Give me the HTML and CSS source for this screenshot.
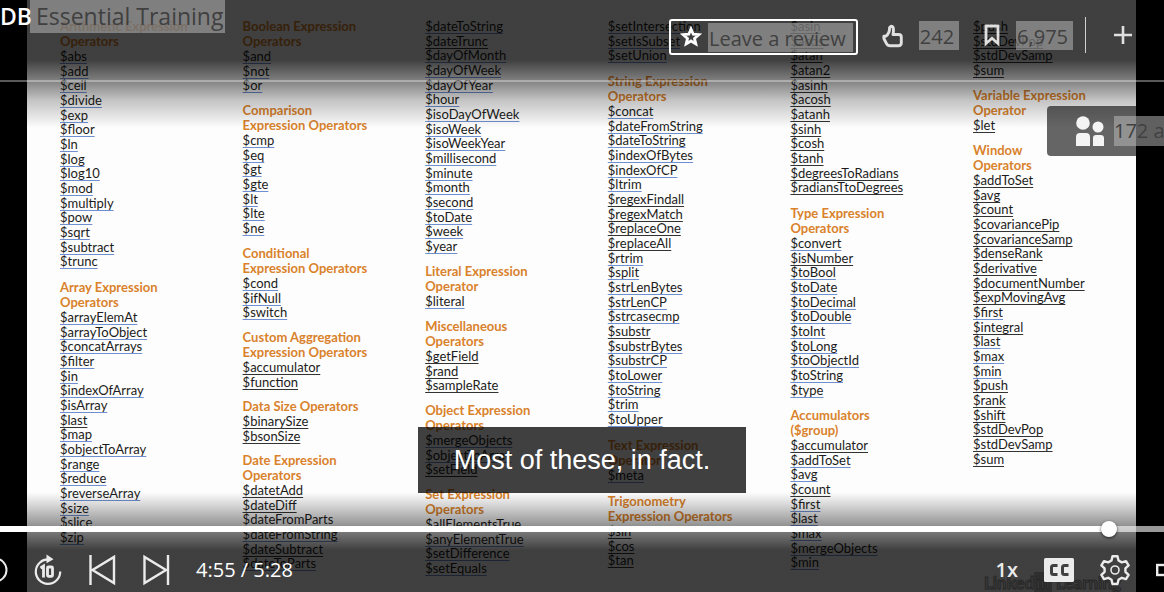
FILE: index.html
```html
<!DOCTYPE html>
<html lang="en">
<head>
<meta charset="utf-8">
<title>MongoDB Essential Training</title>
<link rel="stylesheet" href="styles.css">
</head>
<body>
<main class="player">
  <section class="slide">
    <div class="column roomy">
      <section><h3>Arithmetic Expression Operators</h3>
        <ul><li><a href="#">$abs</a></li><li><a href="#">$add</a></li><li><a href="#">$ceil</a></li><li><a href="#">$divide</a></li><li><a href="#">$exp</a></li><li><a href="#">$floor</a></li><li><a href="#">$ln</a></li><li><a href="#">$log</a></li><li><a href="#">$log10</a></li><li><a href="#">$mod</a></li><li><a href="#">$multiply</a></li><li><a href="#">$pow</a></li><li><a href="#">$sqrt</a></li><li><a href="#">$subtract</a></li><li><a href="#">$trunc</a></li></ul></section>
      <section><h3>Array Expression Operators</h3>
        <ul><li><a href="#">$arrayElemAt</a></li><li><a href="#">$arrayToObject</a></li><li><a href="#">$concatArrays</a></li><li><a href="#">$filter</a></li><li><a href="#">$in</a></li><li><a href="#">$indexOfArray</a></li><li><a href="#">$isArray</a></li><li><a href="#" class="fresh">$last</a></li><li><a href="#">$map</a></li><li><a href="#">$objectToArray</a></li><li><a href="#">$range</a></li><li><a href="#">$reduce</a></li><li><a href="#">$reverseArray</a></li><li><a href="#">$size</a></li><li><a href="#">$slice</a></li><li><a href="#">$zip</a></li></ul></section>
    </div>
    <div class="column">
      <section><h3>Boolean Expression Operators</h3>
        <ul><li><a href="#">$and</a></li><li><a href="#">$not</a></li><li><a href="#">$or</a></li></ul></section>
      <section><h3>Comparison<br>Expression Operators</h3>
        <ul><li><a href="#">$cmp</a></li><li><a href="#">$eq</a></li><li><a href="#">$gt</a></li><li><a href="#">$gte</a></li><li><a href="#">$lt</a></li><li><a href="#">$lte</a></li><li><a href="#">$ne</a></li></ul></section>
      <section><h3>Conditional<br>Expression Operators</h3>
        <ul><li><a href="#">$cond</a></li><li><a href="#">$ifNull</a></li><li><a href="#">$switch</a></li></ul></section>
      <section><h3>Custom Aggregation Expression Operators</h3>
        <ul><li><a href="#" class="fresh">$accumulator</a></li><li><a href="#" class="fresh">$function</a></li></ul></section>
      <section><h3>Data Size Operators</h3>
        <ul><li><a href="#" class="fresh">$binarySize</a></li><li><a href="#" class="fresh">$bsonSize</a></li></ul></section>
      <section><h3>Date Expression Operators</h3>
        <ul><li><a href="#" class="fresh">$datetAdd</a></li><li><a href="#" class="fresh">$dateDiff</a></li><li><a href="#">$dateFromParts</a></li><li><a href="#">$dateFromString</a></li><li><a href="#" class="fresh">$dateSubtract</a></li><li><a href="#">$dateToParts</a></li></ul></section>
    </div>
    <div class="column">
      <section>
        <ul><li><a href="#">$dateToString</a></li><li><a href="#" class="fresh">$dateTrunc</a></li><li><a href="#">$dayOfMonth</a></li><li><a href="#">$dayOfWeek</a></li><li><a href="#">$dayOfYear</a></li><li><a href="#">$hour</a></li><li><a href="#">$isoDayOfWeek</a></li><li><a href="#">$isoWeek</a></li><li><a href="#">$isoWeekYear</a></li><li><a href="#">$millisecond</a></li><li><a href="#">$minute</a></li><li><a href="#">$month</a></li><li><a href="#">$second</a></li><li><a href="#">$toDate</a></li><li><a href="#">$week</a></li><li><a href="#">$year</a></li></ul></section>
      <section><h3>Literal Expression Operator</h3>
        <ul><li><a href="#">$literal</a></li></ul></section>
      <section><h3>Miscellaneous Operators</h3>
        <ul><li><a href="#" class="fresh">$getField</a></li><li><a href="#" class="fresh">$rand</a></li><li><a href="#" class="fresh">$sampleRate</a></li></ul></section>
      <section><h3>Object Expression Operators</h3>
        <ul><li><a href="#">$mergeObjects</a></li><li><a href="#">$objectToArray</a></li><li><a href="#" class="fresh">$setField</a></li></ul></section>
      <section><h3>Set Expression Operators</h3>
        <ul><li><a href="#">$allElementsTrue</a></li><li><a href="#">$anyElementTrue</a></li><li><a href="#">$setDifference</a></li><li><a href="#">$setEquals</a></li></ul></section>
    </div>
    <div class="column roomy">
      <section>
        <ul><li><a href="#">$setIntersection</a></li><li><a href="#">$setIsSubset</a></li><li><a href="#">$setUnion</a></li></ul></section>
      <section><h3>String Expression Operators</h3>
        <ul><li><a href="#">$concat</a></li><li><a href="#">$dateFromString</a></li><li><a href="#">$dateToString</a></li><li><a href="#">$indexOfBytes</a></li><li><a href="#">$indexOfCP</a></li><li><a href="#">$ltrim</a></li><li><a href="#" class="fresh">$regexFindall</a></li><li><a href="#" class="fresh">$regexMatch</a></li><li><a href="#" class="fresh">$replaceOne</a></li><li><a href="#" class="fresh">$replaceAll</a></li><li><a href="#">$rtrim</a></li><li><a href="#">$split</a></li><li><a href="#">$strLenBytes</a></li><li><a href="#">$strLenCP</a></li><li><a href="#">$strcasecmp</a></li><li><a href="#" class="fresh">$substr</a></li><li><a href="#">$substrBytes</a></li><li><a href="#">$substrCP</a></li><li><a href="#">$toLower</a></li><li><a href="#">$toString</a></li><li><a href="#">$trim</a></li><li><a href="#">$toUpper</a></li></ul></section>
      <section><h3>Text Expression Operator</h3>
        <ul><li><a href="#">$meta</a></li></ul></section>
      <section><h3>Trigonometry<br>Expression Operators</h3>
        <ul><li><a href="#" class="fresh">$sin</a></li><li><a href="#" class="fresh">$cos</a></li><li><a href="#" class="fresh">$tan</a></li></ul></section>
    </div>
    <div class="column roomy">
      <section>
        <ul><li><a href="#" class="fresh">$asin</a></li><li><a href="#" class="fresh">$acos</a></li><li><a href="#" class="fresh">$atan</a></li><li><a href="#" class="fresh">$atan2</a></li><li><a href="#" class="fresh">$asinh</a></li><li><a href="#" class="fresh">$acosh</a></li><li><a href="#" class="fresh">$atanh</a></li><li><a href="#" class="fresh">$sinh</a></li><li><a href="#" class="fresh">$cosh</a></li><li><a href="#" class="fresh">$tanh</a></li><li><a href="#" class="fresh">$degreesToRadians</a></li><li><a href="#" class="fresh">$radiansTtoDegrees</a></li></ul></section>
      <section><h3>Type Expression Operators</h3>
        <ul><li><a href="#">$convert</a></li><li><a href="#" class="fresh">$isNumber</a></li><li><a href="#">$toBool</a></li><li><a href="#">$toDate</a></li><li><a href="#">$toDecimal</a></li><li><a href="#">$toDouble</a></li><li><a href="#">$toInt</a></li><li><a href="#">$toLong</a></li><li><a href="#">$toObjectId</a></li><li><a href="#">$toString</a></li><li><a href="#">$type</a></li></ul></section>
      <section><h3>Accumulators<br>($group)</h3>
        <ul><li><a href="#" class="fresh">$accumulator</a></li><li><a href="#">$addToSet</a></li><li><a href="#">$avg</a></li><li><a href="#" class="fresh">$count</a></li><li><a href="#">$first</a></li><li><a href="#">$last</a></li><li><a href="#">$max</a></li><li><a href="#">$mergeObjects</a></li><li><a href="#">$min</a></li></ul></section>
    </div>
    <div class="column">
      <section>
        <ul><li><a href="#" class="fresh">$push</a></li><li><a href="#" class="fresh">$stdDevPop</a></li><li><a href="#" class="fresh">$stdDevSamp</a></li><li><a href="#" class="fresh">$sum</a></li></ul></section>
      <section><h3>Variable Expression Operator</h3>
        <ul><li><a href="#" class="fresh">$let</a></li></ul></section>
      <section><h3>Window<br>Operators</h3>
        <ul><li><a href="#" class="fresh">$addToSet</a></li><li><a href="#" class="fresh">$avg</a></li><li><a href="#" class="fresh">$count</a></li><li><a href="#" class="fresh">$covariancePip</a></li><li><a href="#" class="fresh">$covarianceSamp</a></li><li><a href="#" class="fresh">$denseRank</a></li><li><a href="#" class="fresh">$derivative</a></li><li><a href="#" class="fresh">$documentNumber</a></li><li><a href="#" class="fresh">$expMovingAvg</a></li><li><a href="#">$first</a></li><li><a href="#" class="fresh">$integral</a></li><li><a href="#">$last</a></li><li><a href="#">$max</a></li><li><a href="#">$min</a></li><li><a href="#" class="fresh">$push</a></li><li><a href="#" class="fresh">$rank</a></li><li><a href="#" class="fresh">$shift</a></li><li><a href="#" class="fresh">$stdDevPop</a></li><li><a href="#" class="fresh">$stdDevSamp</a></li><li><a href="#" class="fresh">$sum</a></li></ul></section>
    </div>
    <p class="watermark">Linked<span>in</span> Learning</p>
  </section>

  <div class="chrome">
    <header class="topbar">
      <h1 class="title"><strong>DB</strong><span class="mark">Essential Training</span></h1>
      <div class="actions">
        <button class="review" type="button">
          <svg width="22" height="22" viewBox="0 0 22 22"><path d="M11 3l2.200 5.200 5.600.5-4.300 3.700 1.300 5.500L11 15l-4.800 2.900 1.300-5.500L3.200 8.700l5.600-.5z" fill="none" stroke="#fff" stroke-width="2.800"/></svg>
          <span class="mark">Leave a review</span>
        </button>
        <button class="stat" type="button" aria-label="Like">
          <svg width="22" height="25" viewBox="0 0 22 25"><path d="M9 3.200c2.600 0 3 3 2 8.300h5.600c1.900 0 2.700.9 2.700 2.700v5.600c0 2-1 3-2.900 3H8.300c-2.200 0-3.200-.9-4.100-2.700L1.900 15.500v-2.300h1.800C6.500 11.400 7.700 9 7.600 4.500z" fill="none" stroke="#e0e0e0" stroke-width="2.900" stroke-linejoin="round"/></svg>
          <span class="mark">242</span>
        </button>
        <button class="stat" type="button" aria-label="Save">
          <svg width="18" height="24" viewBox="0 0 18 24"><path d="M3 3h12v17.500l-6-5.200-6 5.200z" fill="none" stroke="#e0e0e0" stroke-width="2.800"/></svg>
          <span class="mark">6,975</span>
        </button>
        <button class="add" type="button" aria-label="Add">
          <svg width="18" height="18" viewBox="0 0 18 18"><path d="M9 0v18M0 9h18" stroke="#e0e0e0" stroke-width="2.600"/></svg>
        </button>
      </div>
    </header>

    <div class="stage">
      <aside class="viewers">
        <svg width="28" height="30" viewBox="0 0 28 30" fill="#f4f4f4"><circle cx="7" cy="7" r="6.800"/><circle cx="22" cy="11" r="5.500"/><path d="M0 30v-9q0-4 4-4h6q4 0 4 4v9zM17 30v-8q0-3 3-3h4.500q3.500 0 3.500 3v8z"/></svg>
        <span class="mark">172 a</span>
      </aside>
      <p class="caption">Most of these, in fact.</p>
    </div>

    <input class="seek" type="range" min="0" max="1000" value="959" aria-label="Seek">

    <div class="controls">
      <div class="group">
        <button class="back" type="button" aria-label="Back 10 seconds"><svg width="28" height="32" viewBox="0 0 28 32"><circle cx="-5" cy="16" r="11.500" fill="none" stroke="#ebebeb" stroke-width="2"/></svg></button>
        <button type="button" aria-label="Forward 10 seconds"><svg width="28" height="32" viewBox="0 0 28 32"><path d="M15 5.500A12.200 12.200 0 1 0 26.200 17.500" fill="none" stroke="#ebebeb" stroke-width="2.200"/><path d="M12.500.5l7 4.800-7 4z" fill="#ebebeb"/><path d="M6.500 14l3-2v11.500M14.500 13h3q1 0 1 1v7.300q0 1-1 1h-3q-1 0-1-1V14q0-1 1-1z" fill="none" stroke="#ebebeb" stroke-width="2.800"/></svg></button>
        <button type="button" aria-label="Previous"><svg width="28" height="32" viewBox="0 0 28 32"><path d="M2.500 1v30M26 3v26L4.500 16z" fill="none" stroke="#ebebeb" stroke-width="2.400"/></svg></button>
        <button type="button" aria-label="Next"><svg width="28" height="32" viewBox="0 0 28 32"><path d="M26 1v30M2.500 3v26L24 16z" fill="none" stroke="#ebebeb" stroke-width="2.400"/></svg></button>
        <span class="time">4:55 / 5:28</span>
      </div>
      <div class="group">
        <button class="speed" type="button">1x</button>
        <button type="button" aria-label="Captions"><svg width="30" height="32" viewBox="0 0 30 32"><rect y="4" width="30" height="24" rx="1.500" fill="#ebebeb"/><path d="M13.500 11.500H9.500q-2 0-2 2v5q0 2 2 2h4M24.500 11.500h-4q-2 0-2 2v5q0 2 2 2h4" fill="none" stroke="#404040" stroke-width="3"/></svg></button>
        <button type="button" aria-label="Settings"><svg width="30" height="32" viewBox="0 0 30 32"><path d="M12.500 2.200h5l1 4.300 3.300 1.900 4.200-1.300 2.600 4.300-3.200 3v3.400l3.200 3-2.600 4.300-4.200-1.300-3.300 1.900-1 4.300h-5l-1-4.300-3.300-1.900L4 25.100l-2.600-4.300 3.200-3v-3.400l-3.200-3L4 7.100l4.200 1.300 3.300-1.900z" fill="none" stroke="#ebebeb" stroke-width="2.400" stroke-linejoin="round"/><circle cx="15" cy="16" r="4" fill="none" stroke="#ebebeb" stroke-width="1.600"/></svg></button>
        <button class="cut" type="button" aria-label="Theater mode"><svg width="30" height="32" viewBox="0 0 30 32"><rect x="1.200" y="11" width="27" height="10" fill="none" stroke="#ebebeb" stroke-width="2.400"/></svg></button>
      </div>
    </div>
  </div>
</main>
</body>
</html>
```
FILE: styles.css
```css
* { box-sizing: border-box; }

body {
  margin: 0;
  background: #000;
  font-family: "Open Sans", "Noto Sans", sans-serif;
}

h1, h3, p, ul {
  margin: 0;
  padding: 0;
  font-weight: 400;
}

button {
  display: flex;
  align-items: center;
  padding: 0;
  border: 0;
  background: none;
  color: inherit;
  font: inherit;
}

svg { flex: none; display: block; }

.player {
  display: grid;
  grid-template-columns: minmax(0, 1fr);
  min-height: 100vh;
  overflow: hidden;
}

/* The slide and the player chrome share one cell, chrome on top. */
.slide, .chrome { grid-area: 1 / 1; }

.slide {
  position: relative;
  display: grid;
  grid-template-columns: repeat(5, 1fr) 163px;
  align-items: start;
  margin: 0 28px 0 27px;
  padding: 19px 0 0 33px;
  background: #fdfdfd;
  color: #1c1c20;
  font: 13px/15px Lato, sans-serif;
}

.column {
  display: flex;
  flex-direction: column;
  gap: 10px;
}

.roomy { gap: 11px; }

.column h3 {
  max-width: 136px;
  color: #d9822b;
  font: 700 13px/15px Lato, sans-serif;
}

.column ul { list-style: none; }
.column li:nth-child(3n + 2) { line-height: 14px; }

.column a {
  color: inherit;
  text-decoration: underline 1px #6f8fd0;
  text-underline-offset: 2px;
}

.column .fresh { text-decoration-color: #333; }

.watermark {
  position: absolute;
  right: 15px;
  bottom: 0;
  color: #f4f4f4;
  font-weight: 700;
  font-size: 17px;
  line-height: 18px;
  -webkit-text-stroke: 1px #999;
}

.watermark span {
  padding: 0 2px;
  background: #bbb;
}

.chrome {
  position: relative;
  display: flex;
  flex-direction: column;
  background:
    linear-gradient(to bottom, rgba(0, 0, 0, .75) 60px, rgba(0, 0, 0, .5) 80px, rgba(0, 0, 0, .23) 100px, transparent 128px),
    linear-gradient(to top, rgba(0, 0, 0, .75) 42px, rgba(0, 0, 0, .5) 62px, rgba(0, 0, 0, .4) 68px, rgba(0, 0, 0, .14) 88px, transparent 100px);
  color: #fff;
}

.topbar {
  display: flex;
  justify-content: space-between;
  align-items: flex-start;
  height: 82px;
  border-bottom: 2px solid rgba(255, 255, 255, .35);
}

.mark {
  padding: 0 2px;
  background: rgba(191, 191, 191, .5);
  color: #404040;
  font-size: 20px;
  line-height: 30px;
  white-space: nowrap;
}

.title {
  display: flex;
  font-size: 23px;
  line-height: 33px;
}

.title strong { width: 30px; font-weight: 600; }

.title .mark {
  padding-left: 6px;
  font-size: 23px;
  line-height: 33px;
}

.actions {
  display: flex;
  align-items: center;
  gap: 24px;
  padding: 15px 32px 0 0;
}

.review {
  gap: 6px;
  height: 36px;
  margin-top: 4px;
  padding: 0 3px 0 9px;
  border: 2px solid #fff;
  border-radius: 3px;
}

.actions .mark {
  padding: 2px 5px 0 1px;
  line-height: 27px;
}

.review .mark { padding-right: 7px; }

.stat { gap: 15px; }

.add {
  height: 36px;
  margin-left: -12px;
  padding-left: 28px;
  border-left: 1px solid #d0d0d0;
}

.stage {
  flex: 1;
  display: flex;
  flex-direction: column;
  justify-content: space-between;
  align-items: center;
  padding: 24px 0 28px;
}

.viewers {
  align-self: flex-end;
  display: flex;
  align-items: center;
  gap: 10px;
  width: 117px;
  height: 50px;
  padding-left: 29px;
  border-radius: 4px 0 0 4px;
  background: rgba(0, 0, 0, .6);
  overflow: hidden;
}

.viewers .mark { padding-left: 0; }

.caption {
  padding: 0 36px;
  background: rgba(0, 0, 0, .75);
  font: 27px/66px "Liberation Sans", Arial, sans-serif;
}

.seek {
  appearance: none;
  width: 100%;
  height: 16px;
  margin: 0;
  background: none;
}

.seek::-webkit-slider-runnable-track {
  height: 6px;
  background: linear-gradient(to right, #fff 95%, rgba(255, 255, 255, .6) 95%);
}

.seek::-webkit-slider-thumb {
  appearance: none;
  width: 16px;
  height: 16px;
  margin-top: -5px;
  border-radius: 50%;
  background: #fff;
  box-shadow: 0 1px 3px rgba(0, 0, 0, .7);
}

.controls {
  display: flex;
  justify-content: space-between;
  height: 55px;
  padding: 17px 0 6px;
}

.group {
  display: flex;
  align-items: center;
  gap: 26px;
}

.back { width: 8px; }
.time, .speed { font-size: 20px; line-height: 32px; }
.speed { font-weight: 600; color: #ebebeb; }
.cut { width: 8px; overflow: hidden; }
```
